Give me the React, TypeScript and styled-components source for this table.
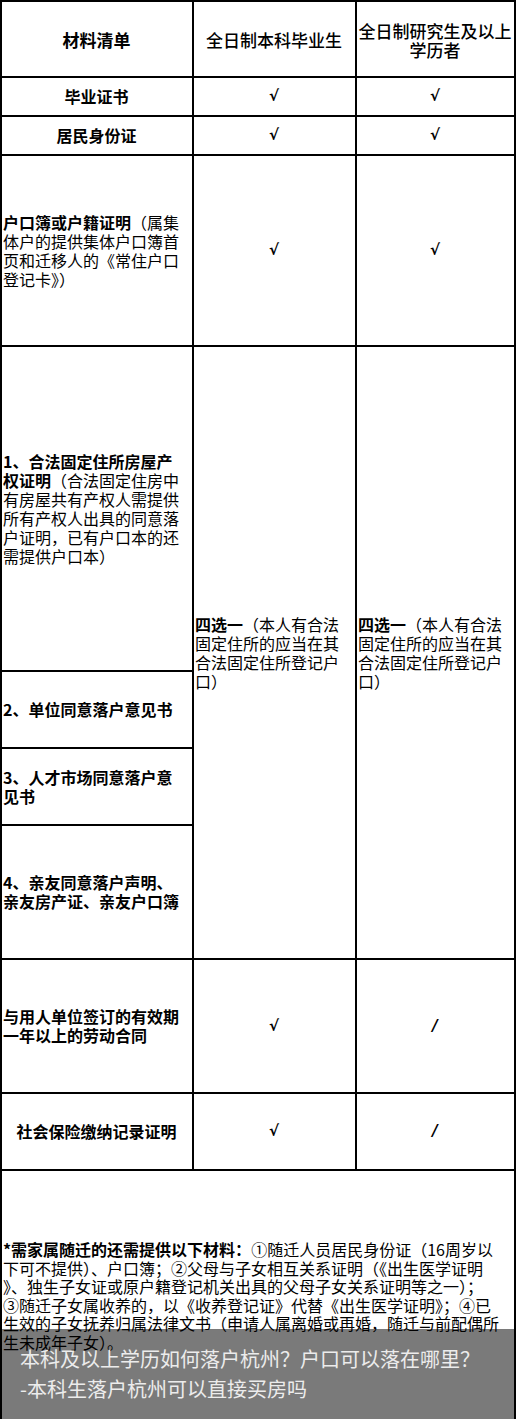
import React, { ReactNode } from 'react';
import styled, { createGlobalStyle } from 'styled-components';

const GlobalStyle = createGlobalStyle`
  html, body {
    margin: 0;
    padding: 0;
    background: #fff;
  }
  body {
    font-family: "Noto Sans CJK SC", "Liberation Sans", sans-serif;
    color: #000;
  }
`;

type Align = 'left' | 'center';

interface CellProps {
  $align?: Align;
  $rows?: number;
  $full?: boolean;
  $padRight?: number;
}

const Page = styled.div`
  position: relative;
  width: 516px;
  height: 1419px;
  overflow: hidden;
`;

const Sheet = styled.div`
  box-sizing: border-box;
  width: 516px;
  display: grid;
  grid-template-columns: 190px 161px 157px;
  grid-template-rows: 74px 37px 37px 189px 323px 75px 75px 132px 132px 75px 249px;
  gap: 2px;
  padding: 2px;
  background: #000;
`;

const Cell = styled.div<CellProps>`
  background: #fff;
  display: flex;
  flex-direction: column;
  justify-content: center;
  padding: 0 ${p => p.$padRight ?? 2}px 0 1px;
  text-align: ${p => p.$align ?? 'left'};
  font-size: 16px;
  line-height: 19px;
  grid-row: ${p => (p.$rows ? `span ${p.$rows}` : 'auto')};
  grid-column: ${p => (p.$full ? '1 / -1' : 'auto')};
  overflow: hidden;
`;

const HeadText = styled.div<{ $weight?: number }>`
  font-size: 17px;
  line-height: 18.5px;
  font-weight: ${p => p.$weight ?? 500};
  text-align: center;
  padding-top: 3px;
`;

const Bold = styled.strong`
  font-weight: 700;
`;

const Mark = styled.span`
  font-family: "DejaVu Sans", sans-serif;
  font-weight: 700;
  font-style: italic;
  font-size: 15px;
  line-height: 19px;
  text-align: center;
`;

const Note = styled.div`
  font-size: 16px;
  line-height: 18.5px;
  white-space: nowrap;
`;

const Caption = styled.div`
  position: absolute;
  left: 0;
  right: 0;
  bottom: 0;
  height: 90px;
  box-sizing: border-box;
  padding: 15px 0 0 20px;
  background: rgba(0, 0, 0, 0.52);
  color: #ececec;
  font-size: 20px;
  line-height: 30px;
`;

const Check = () => <Mark>√</Mark>;
const Dash = () => <Mark>/</Mark>;

interface RowProps {
  label: ReactNode;
  align?: Align;
  second: ReactNode;
  third: ReactNode;
}

const Row = ({ label, align = 'center', second, third }: RowProps) => (
  <>
    <Cell $align={align} $padRight={align === 'left' ? 9 : 2}>
      <div>{label}</div>
    </Cell>
    <Cell $align="center">{second}</Cell>
    <Cell $align="center">{third}</Cell>
  </>
);

const choice = (
  <div>
    <Bold>四选一</Bold>（本人有合法固定住所的应当在其合法固定住所登记户口）
  </div>
);

const App = () => {
  return (
    <Page>
      <GlobalStyle />
      <Sheet>
        <Cell $align="center">
          <HeadText $weight={700}>材料清单</HeadText>
        </Cell>
        <Cell $align="center">
          <HeadText>全日制本科毕业生</HeadText>
        </Cell>
        <Cell $align="center">
          <HeadText>
            全日制研究生及以上
            <br />
            学历者
          </HeadText>
        </Cell>

        <Row label={<Bold>毕业证书</Bold>} second={<Check />} third={<Check />} />
        <Row label={<Bold>居民身份证</Bold>} second={<Check />} third={<Check />} />
        <Row
          align="left"
          label={
            <>
              <Bold>户口簿或户籍证明</Bold>（属集体户的提供集体户口簿首页和迁移人的《常住户口登记卡》）
            </>
          }
          second={<Check />}
          third={<Check />}
        />

        <Cell $padRight={9}>
          <div>
            <Bold>1、合法固定住所房屋产权证明</Bold>
            （合法固定住房中有房屋共有产权人需提供所有产权人出具的同意落户证明，已有户口本的还需提供户口本）
          </div>
        </Cell>
        <Cell $rows={4} $padRight={4}>
          {choice}
        </Cell>
        <Cell $rows={4} $padRight={2}>
          {choice}
        </Cell>
        <Cell $padRight={9}>
          <div>
            <Bold>2、单位同意落户意见书</Bold>
          </div>
        </Cell>
        <Cell $padRight={9}>
          <div>
            <Bold>3、人才市场同意落户意见书</Bold>
          </div>
        </Cell>
        <Cell $padRight={9}>
          <div>
            <Bold>4、亲友同意落户声明、亲友房产证、亲友户口簿</Bold>
          </div>
        </Cell>

        <Row
          align="left"
          label={<Bold>与用人单位签订的有效期一年以上的劳动合同</Bold>}
          second={<Check />}
          third={<Dash />}
        />
        <Row label={<Bold>社会保险缴纳记录证明</Bold>} second={<Check />} third={<Dash />} />

        <Cell $full>
          <Note>
            <Bold>*需家属随迁的还需提供以下材料：</Bold>①随迁人员居民身份证（16周岁以
            <br />
            下可不提供）、户口簿；②父母与子女相互关系证明（《出生医学证明
            <br />
            》、独生子女证或原户籍登记机关出具的父母子女关系证明等之一）；
            <br />
            ③随迁子女属收养的，以《收养登记证》代替《出生医学证明》；④已
            <br />
            生效的子女抚养归属法律文书（申请人属离婚或再婚，随迁与前配偶所
            <br />
            生未成年子女）。
          </Note>
        </Cell>
      </Sheet>
      <Caption>
        本科及以上学历如何落户杭州？户口可以落在哪里？
        <br />
        -本科生落户杭州可以直接买房吗
      </Caption>
    </Page>
  );
};

export default App;
